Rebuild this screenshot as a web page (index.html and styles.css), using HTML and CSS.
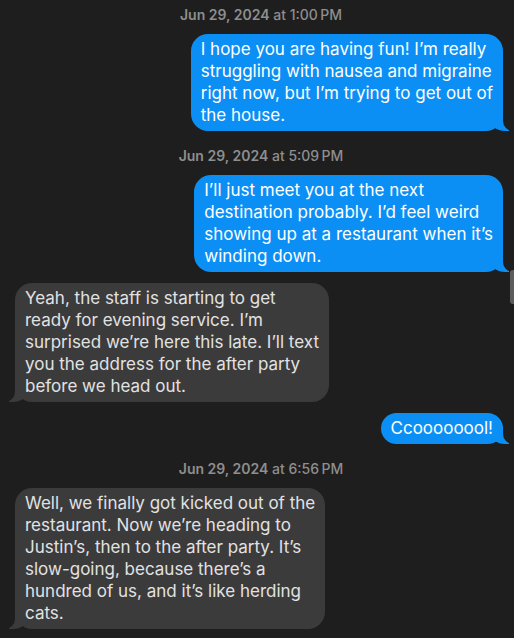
FILE: index.html
```html
<!DOCTYPE html>
<html lang="en">
<head>
  <meta charset="UTF-8" />
  <title>Messages</title>
  <link rel="stylesheet" href="styles.css">
</head>
<body>
  <div class="thread">
    <div class="stamp"><b>Jun 29, 2024</b> at 1:00&#8239;PM</div>
    <div class="row sent">
      <div class="bubble">I hope you are having fun! I’m really<br/>struggling with nausea and migraine<br/>right now, but I’m trying to get out of<br/>the house.</div>
    </div>

    <div class="stamp"><b>Jun 29, 2024</b> at 5:09&#8239;PM</div>
    <div class="row sent">
      <div class="bubble">I’ll just meet you at the next<br/>destination probably. I’d feel weird<br/>showing up at a restaurant when it’s<br/>winding down.</div>
    </div>
    <div class="row received">
      <div class="bubble">Yeah, the staff is starting to get<br/>ready for evening service. I’m<br/>surprised we’re here this late. I’ll text<br/>you the address for the after party<br/>before we head out.</div>
    </div>
    <div class="row sent">
      <div class="bubble">Ccoooooool!</div>
    </div>

    <div class="stamp"><b>Jun 29, 2024</b> at 6:56&#8239;PM</div>
    <div class="row received">
      <div class="bubble">Well, we finally got kicked out of the<br/>restaurant. Now we’re heading to<br/>Justin’s, then to the after party. It’s<br/>slow-going, because there’s a<br/>hundred of us, and it’s like herding<br/>cats.</div>
    </div>
  </div>

  <div class="scroll-thumb"></div>
</body>
</html>
```

FILE: styles.css
```css
html, body {
  margin: 0;
  padding: 0;
  height: 100%;
  overflow: hidden;
  background: #1e1e1e;
  font-family: Inter, "Liberation Sans", sans-serif;
}

.thread {
  display: flex;
  flex-direction: column;
  gap: 11px;
  padding: 7px 11px 0 15px;
}

.stamp {
  text-align: center;
  font-size: 14px;
  line-height: 16px;
  color: #8e8e8e;
  font-weight: 500;
  margin-top: 6px;
  padding-left: 4px;
}

.stamp:first-child {
  margin-top: 0;
}

.stamp b {
  font-weight: 600;
}

.row {
  display: flex;
}

.row.sent {
  justify-content: flex-end;
}

.row.received {
  justify-content: flex-start;
}

.bubble {
  position: relative;
  z-index: 0;
  white-space: nowrap;
  font-size: 17px;
  line-height: 22px;
  padding: 4px 10px 5px 10px;
  border-radius: 17px;
}

.sent .bubble {
  background: #0b8ff5;
  color: #fff;
}

.received .bubble {
  background: #3b3b3c;
  color: #e2e2e2;
}

/* tails, kept behind the text */
.bubble::before,
.bubble::after {
  content: "";
  position: absolute;
  z-index: -1;
  bottom: 0;
  height: 18px;
}

.sent .bubble::before {
  right: -6px;
  width: 20px;
  background: #0b8ff5;
  border-bottom-left-radius: 16px 14px;
}

.sent .bubble::after {
  right: -20px;
  width: 20px;
  background: #1e1e1e;
  border-bottom-left-radius: 10px;
}

.received .bubble::before {
  left: -6px;
  width: 20px;
  background: #3b3b3c;
  border-bottom-right-radius: 16px 14px;
}

.received .bubble::after {
  left: -20px;
  width: 20px;
  background: #1e1e1e;
  border-bottom-right-radius: 10px;
}

.scroll-thumb {
  position: absolute;
  top: 270px;
  right: 0;
  width: 4px;
  height: 34px;
  background: #5c5c5c;
  border-radius: 3px 0 0 3px;
}
```
